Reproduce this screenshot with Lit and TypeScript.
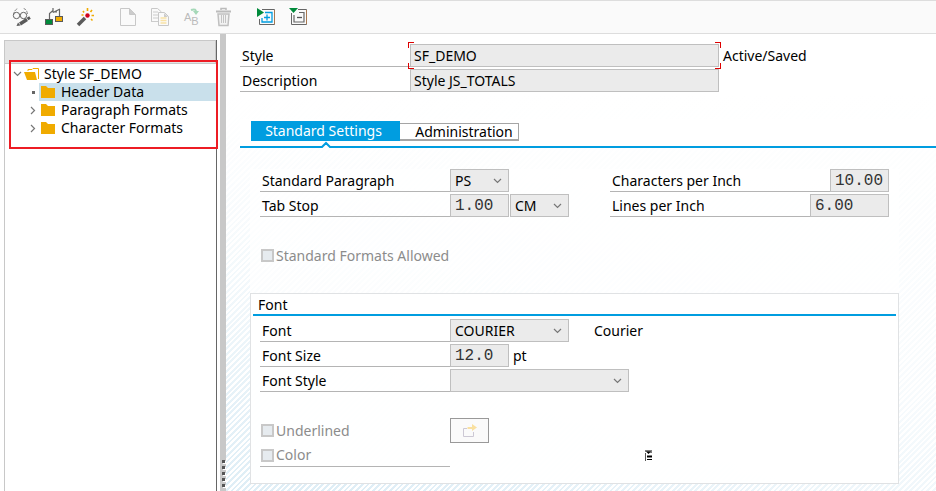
import { LitElement, html, css, svg } from "lit";
import { customElement } from "lit/decorators.js";

const icon = (w: number, h: number, body: unknown) =>
  html`<svg width=${w} height=${h} viewBox="0 0 ${w} ${h}" fill="none" aria-hidden="true">${body}</svg>`;

const display = icon(20, 20, svg`
  <path d="M1.500 8C2 4 4 2 6 1.500M15.500 7C15 4 14 2 11.500 1.500" stroke="#888" stroke-dasharray="3 1"/>
  <circle cx="4.500" cy="8.500" r="3.200" stroke="#666"/><circle cx="11.500" cy="8.500" r="3.200" stroke="#666"/>
  <path d="M7.500 8h1" stroke="#666"/>
  <path d="M8 17L15 12.500" stroke="#5a5a5a" stroke-width="3.500"/><path d="M4.500 19l1.500-3.500 2.500 3z" fill="#5a5a5a"/><path d="M15.500 12l2.500-1.500" stroke="#5a5a5a" stroke-width="3"/>`);
const relations = icon(20, 20, svg`
  <path d="M5.500 12V6.500L9 3.500M9 5.500l7-3.500M9 1v4h4M15.500 2v7" stroke="#666" stroke-width="1.200"/>
  <rect x="1.500" y="12.500" width="7" height="5" fill="#008a3b" stroke="#5a5a5a"/>
  <rect x="11.500" y="9.500" width="7" height="5" fill="#f0ab00" stroke="#5a5a5a"/>`);
const wand = icon(20, 20, svg`
  <path d="M2 18L9 11" stroke="#5a5a5a" stroke-width="3.500"/><circle cx="11.500" cy="8.500" r="2.200" fill="#d0021b"/>
  <path d="M7 4l1 1.500M11.500 1v3M16 3l-1.500 2M15.500 8.500H18M15 12l1.500 1.500M5.500 8h2" stroke="#f0ab00" stroke-width="1.600"/>`);
const page = icon(18, 20, svg`<path d="M1.500 1.500h9l6 6v11h-15z M10.500 1.500v6h6" fill="#fafafa" stroke="#c8c8c8"/><path d="M11 2l5 5h-5z" fill="#ccc"/>`);
const copy = icon(20, 20, svg`
  <path d="M1.500 14.500v-13h6l4 3.500" stroke="#c8c8c8"/><path d="M1 14.500h7M3 5h5M3 8h5M3 11h5" stroke="#ccc"/>
  <path d="M8.500 5.500h6l4 4v9h-10z" fill="#fafafa" stroke="#c8c8c8"/><path d="M14 6v4h4z" fill="#ccc"/>
  <path d="M10.500 11h6M10.500 13.500h6M10.500 16h6" stroke="#f9e2a5" stroke-width="1.300"/>`);
const swap = html`<span class="ab"><span>A</span><span>B</span>${icon(9, 7, svg`<path d="M1 2c4-1.500 5 0 5 2" stroke="#a5d8b8" stroke-width="2"/><path d="M3 3h6L6 7z" fill="#a5d8b8"/>`)}</span>`;
const trash = icon(18, 20, svg`
  <path d="M6 3V1.500h5V3" stroke="#bbb" stroke-width="1.500"/><path d="M1 4.500h15" stroke="#bbb" stroke-width="2"/>
  <path d="M3 7l1 11.500h9L14 7z" fill="#f2f2f2" stroke="#c0c0c0" stroke-width="1.500"/><path d="M6.500 8v8M8.500 8v8M10.500 8v8" stroke="#c4c4c4"/>`);
const expand = icon(20, 20, svg`
  <path d="M6 2.500h12.500v15h-15V12" stroke="#666"/><path d="M18.500 3v14" stroke="#a87850"/><path d="M9 5.500h7v9.500H6V11" stroke="#009de0" stroke-width="1.300"/>
  <path d="M8 10.500h6M11 7.500v6" stroke="#009de0" stroke-width="1.300"/><path d="M1 1l7 4.500L1 10z" fill="#008a3b"/>`);
const collapse = icon(20, 20, svg`
  <path d="M10 2.500h8.500v15h-15V6" stroke="#666"/><path d="M18.500 3v14" stroke="#a87850"/><path d="M11 5.500h5v9.500H6V8" stroke="#666" stroke-width="1.200"/>
  <path d="M9 10.500h5" stroke="#555" stroke-width="1.300"/><path d="M1 1h9L5.500 6z" fill="#008a3b"/>`);
const folder = icon(16, 16, svg`<path d="M1 2h5l2 2h7v10H1z" fill="#f0ab00"/>`);
const folderOpen = icon(16, 16, svg`<path d="M4 5V3.500h4l1-1h5.500V13" fill="#fff" stroke="#f0ab00"/><path d="M0 6h11l2 8H3z" fill="#f0ab00"/>`);
const down = icon(9, 6, svg`<path d="M1 1l3.500 3.500L8 1" stroke="#777" stroke-width="1.200"/>`);
const right = icon(6, 9, svg`<path d="M1 1l3.500 3.500L1 8" stroke="#777" stroke-width="1.200"/>`);
const jump = icon(16, 16, svg`<path d="M5 5.500H1.500v8h10V9" stroke="#ccc8d4"/><path d="M5.500 6V4H10V1l5 3.500L10 8V6z" fill="#f9e0a0"/>`);
const outline = icon(8, 12, svg`<path d="M0 1h7" stroke="#000"/><path d="M1 1.500h5L3.500 4z" fill="#000"/><path d="M5 2.500h2" stroke="#777"/><path d="M.5 3v8" stroke="#555"/><path d="M2 6.500h5" stroke="#000" stroke-width="2"/><path d="M2 9.500h5" stroke="#000"/>`);

@customElement("app-root")
export class AppRoot extends LitElement {
  static styles = css`
    * { box-sizing: border-box; }
    :host {
      display: flex; flex-direction: column; min-height: 100vh; background: #fff; color: #000;
      font: 14px/18px "Noto Sans", sans-serif;
    }
    svg { display: block; flex: none; }
    button, input, select { font: inherit; color: inherit; margin: 0; border-radius: 0; }
    .toolbar { display: flex; align-items: center; gap: 8px; height: 34px; padding-left: 10px;
      background: #fafafa; border-top: 1px solid #ddd; border-bottom: 1px solid #ddd; }
    .tool { width: 24px; height: 24px; padding: 0; border: 0; background: none; display: grid; place-items: center; }
    .gap { margin-left: 10px; }
    .ab { display: flex; position: relative; width: 16px; height: 20px; color: #bbb; font: 11px/12px "Liberation Sans", sans-serif; }
    .ab span { align-self: center; }
    .ab span + span { align-self: flex-end; }
    .ab svg { position: absolute; right: 1px; top: 1px; }
    .main { display: flex; flex: 1; }
    .side { width: 213px; margin: 6px 3px 0 4px; border-left: 1px solid #c8c8c8; border-right: 1px solid #666; flex: none; }
    .head { height: 24px; background: #e4e4e4; border: 1px solid #c8c8c8; border-left: 0; }
    .tree { position: relative; list-style: none; margin: 0; padding: 1px 0 0; }
    .tree::after { content: ""; position: absolute; left: 4px; right: -2px; top: -4px; height: 85px; border: 2px solid #ed1c24; }
    .node { display: flex; align-items: center; height: 18px; padding-left: 6px; }
    .mark { width: 12px; display: flex; justify-content: center; flex: none; }
    .child { padding-left: 22px; }
    .dot { width: 3px; height: 3px; background: #666; }
    .name { display: flex; flex: 1; align-items: center; gap: 4px; padding-left: 1px; height: 18px; }
    .child .name { gap: 5px; }
    .selected { background: #c9e0eb; }
    .splitter { width: 6px; background: #c8c8c8; flex: none; display: flex; flex-direction: column; align-items: center; justify-content: flex-end; gap: 3px; padding-bottom: 4px; }
    .splitter i { width: 3px; height: 3px; background: #555; box-shadow: 1px 1px #fff; }
    .work { flex: 1; min-width: 0; padding: 10px 0 6px 14px;
      background:
        linear-gradient(to top right, rgba(255,255,255,.15) 10%, rgba(255,255,255,.75) 60%),
        linear-gradient(to bottom, #fff 60px, transparent 100%),
        repeating-linear-gradient(135deg, #fff 0 2px, #d9ebf5 2px 4px); }
    .row { display: flex; height: 23px; margin-bottom: 2px; align-items: stretch; }
    .label { width: 190px; padding: 3px 2px 0; border-bottom: 1px solid #b4b4b4; flex: none; }
    .top .label { width: 170px; }
    .field { background: #ebebeb; border: 1px solid #bfbfbf; padding: 0 4px; outline: 0; width: 59px; flex: none; }
    .wide { width: 309px; padding: 0 3px; }
    .mono { font: 16px/20px "Liberation Mono", monospace; color: #333; }
    .w79 { width: 79px; }
    .w119 { width: 119px; }
    .w179 { width: 179px; }
    .pick { position: relative; flex: none; display: flex; }
    .pick select { appearance: none; opacity: 1; }
    .pick svg { position: absolute; right: 7px; top: 9px; pointer-events: none; }
    .field + .pick { margin-left: 1px; }
    .after { padding: 3px 0 0 4px; }
    .far { padding-left: 25px; }
    .focus { position: relative; display: flex; }
    .corner { position: absolute; width: 6px; height: 6px; border: 0 solid #d00; }
    .tl { left: -2px; top: -2px; border-width: 1px 0 0 1px; }
    .tr { right: -2px; top: -2px; border-width: 1px 1px 0 0; }
    .bl { left: -2px; bottom: -2px; border-width: 0 0 1px 1px; }
    .br { right: -2px; bottom: -2px; border-width: 0 1px 1px 0; }
    .tabs { position: relative; display: flex; align-items: flex-end; height: 29px; margin-top: 27px; padding: 0 0 5px 11px;
      background: #fff; border-bottom: 2px solid #009de0; }
    .tab { height: 18px; width: 119px; padding: 0 0 0 10px; border: 1px solid #a5a5a5; border-left: 0; border-bottom-width: 2px; background: #fff; line-height: 15px; }
    .tab.on { height: 20px; width: 149px; padding: 0 4px 0 0; border: 0; background: #009de0; color: #fff; line-height: 20px; }
    .notch { position: absolute; left: 80px; bottom: -2px; }
    .panel { margin: 21px 37px 0 10px; background: rgba(255,255,255,.7); }
    .cols { display: grid; grid-template-columns: 350px 279px; padding-left: 10px; }
    .grow { flex: 1; width: auto; }
    .check { display: flex; align-items: center; gap: 2px; height: 23px; color: #8c8c8c; }
    .box { appearance: none; width: 13px; height: 13px; border: 2px solid #c8c8c8; background: #e6ebef; flex: none; }
    .solo { padding-left: 11px; margin-top: 25px; }
    .group { margin: 26px 0 0; border: 1px solid #e0e2e4; padding: 0 2px 16px; background: rgba(255,255,255,.85); }
    .title { margin: 0; padding: 2px 5px 0; height: 22px; font: inherit; border-bottom: 2px solid #009de0; }
    .rows { padding: 3px 0 0 7px; }
    .foot { display: flex; align-items: center; margin: 26px 0 1px; }
    .foot + .foot { margin: 0; }
    .foot .check { width: 190px; padding-left: 1px; }
    .lined { border-bottom: 1px solid #b4b4b4; }
    .jump { width: 39px; height: 25px; padding: 0; border: 1px solid #999; background: #fafafa; display: grid; place-items: center; flex: none; }
    .mini { margin-left: 195px; }
  `;

  tool(label: string, picture: unknown, extra = "") {
    return html`<button class="tool ${extra}" aria-label=${label}>${picture}</button>`;
  }

  pick(id: string, value: string, width = "") {
    return html`<span class="pick"><select id=${id} class="field ${width}"><option>${value}</option></select>${down}</span>`;
  }

  render() {
    return html`
      <div class="toolbar" role="toolbar">
        ${this.tool("Display/Change", display)}${this.tool("Relations", relations)}${this.tool("Activate", wand)}
        ${this.tool("Create", page, "gap")}${this.tool("Copy", copy)}${this.tool("Rename", swap)}${this.tool("Delete", trash)}
        ${this.tool("Expand", expand, "gap")}${this.tool("Collapse", collapse)}
      </div>
      <div class="main">
        <nav class="side">
          <div class="head"></div>
          <ul class="tree">
            <li class="node"><span class="mark">${down}</span><span class="name">${folderOpen}Style SF_DEMO</span></li>
            <li class="node child"><span class="mark"><i class="dot"></i></span><span class="name selected">${folder}Header Data</span></li>
            <li class="node child"><span class="mark">${right}</span><span class="name">${folder}Paragraph Formats</span></li>
            <li class="node child"><span class="mark">${right}</span><span class="name">${folder}Character Formats</span></li>
          </ul>
        </nav>
        <div class="splitter"><i></i><i></i><i></i><i></i><i></i></div>
        <main class="work">
          <div class="top">
            <div class="row"><label class="label" for="style">Style</label>
              <span class="focus"><input id="style" class="field wide" readonly .value=${"SF_DEMO"}>
                <i class="corner tl"></i><i class="corner tr"></i><i class="corner bl"></i><i class="corner br"></i></span>
              <span class="after">Active/Saved</span></div>
            <div class="row"><label class="label" for="desc">Description</label>
              <input id="desc" class="field wide" readonly .value=${"Style JS_TOTALS"}></div>
          </div>
          <div class="tabs" role="tablist">
            <button class="tab on" role="tab" aria-selected="true">Standard Settings</button>
            <button class="tab" role="tab" aria-selected="false">Administration</button>
            <svg class="notch" width="12" height="7" viewBox="0 0 12 7"><path d="M1 7L6 2l5 5z" fill="#fff"/><path d="M0 6h2l4-4 4 4h2" fill="none" stroke="#009de0" stroke-width="2"/></svg>
          </div>
          <div class="panel">
            <div class="cols">
              <div class="row"><label class="label" for="para">Standard Paragraph</label>${this.pick("para", "PS")}</div>
              <div class="row"><label class="label grow" for="cpi">Characters per Inch</label><input id="cpi" class="field mono" readonly .value=${"10.00"}></div>
              <div class="row"><label class="label" for="stop">Tab Stop</label><input id="stop" class="field mono" readonly .value=${"1.00"}><span class="pick"><select class="field" aria-label="Tab stop unit"><option>CM</option></select>${down}</span></div>
              <div class="row"><label class="label grow" for="lpi">Lines per Inch</label><input id="lpi" class="field mono w79" readonly .value=${"6.00"}></div>
            </div>
            <label class="check solo"><input class="box" type="checkbox" disabled>Standard Formats Allowed</label>
            <section class="group">
              <h2 class="title">Font</h2>
              <div class="rows">
                <div class="row"><label class="label" for="font">Font</label>${this.pick("font", "COURIER", "w119")}<span class="after far">Courier</span></div>
                <div class="row"><label class="label" for="size">Font Size</label><input id="size" class="field mono" readonly .value=${"12.0"}><span class="after">pt</span></div>
                <div class="row"><label class="label" for="fstyle">Font Style</label>${this.pick("fstyle", "", "w179")}</div>
                <div class="foot"><label class="check"><input class="box" type="checkbox" disabled>Underlined</label><button class="jump" aria-label="More settings">${jump}</button></div>
                <div class="foot"><label class="check lined"><input class="box" type="checkbox" disabled>Color</label><span class="mini">${outline}</span></div>
              </div>
            </section>
          </div>
        </main>
      </div>`;
  }
}
